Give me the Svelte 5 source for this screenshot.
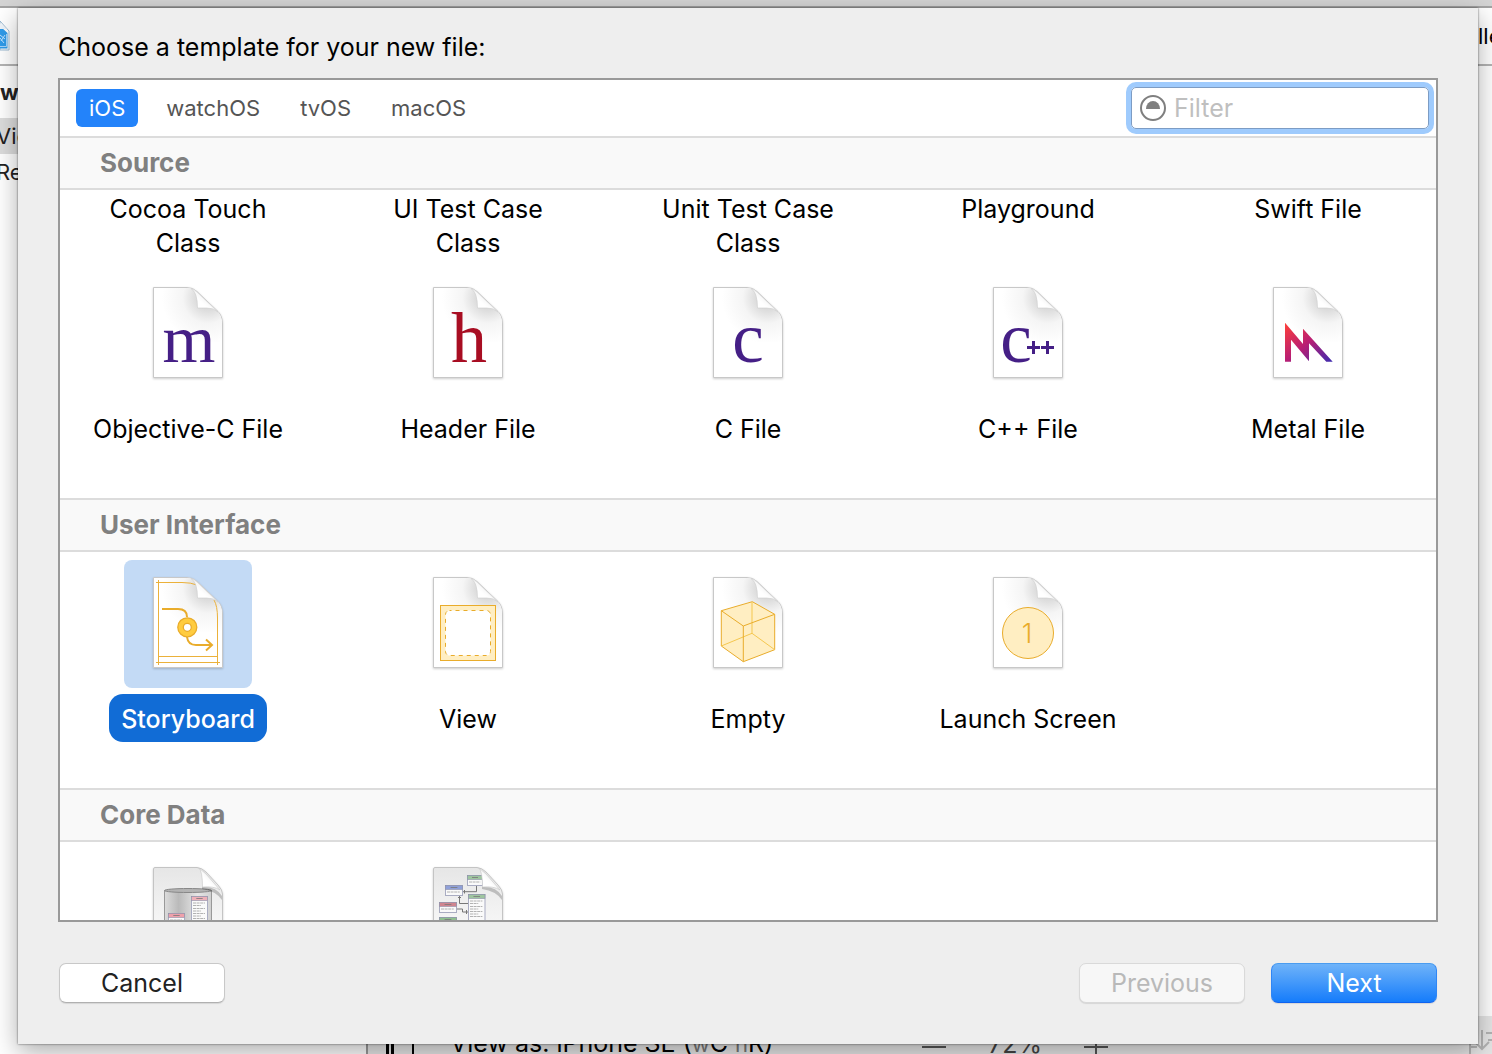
<script>
  const platforms = ['iOS', 'watchOS', 'tvOS', 'macOS'];
  const scrolled = ['Cocoa Touch Class', 'UI Test Case Class', 'Unit Test Case Class', 'Playground', 'Swift File'];
  const sources = [
    { name: 'Objective-C File', art: 'm' },
    { name: 'Header File', art: 'h' },
    { name: 'C File', art: 'c' },
    { name: 'C++ File', art: 'cpp' },
    { name: 'Metal File', art: 'metal' }
  ];
  const interfaces = [
    { name: 'Storyboard', art: 'storyboard' },
    { name: 'View', art: 'view' },
    { name: 'Empty', art: 'empty' },
    { name: 'Launch Screen', art: 'launch' }
  ];
  const models = [
    { name: 'Data Model', art: 'data' },
    { name: 'Mapping Model', art: 'mapping' }
  ];

  let platform = $state('iOS');
  let selected = $state('Storyboard');
  let filter = $state('');
</script>

{#snippet table(x, y, w, h, color)}
  <rect {x} {y} width={w} height={h} fill="#fafafa" stroke="#a9acc2" stroke-width="1" />
  <rect {x} {y} width={w} height="4" fill={color} stroke="#8c90a8" stroke-width=".6" />
  <path d="M{x + w * 0.3} {y + 2}h{w * 0.4}" stroke="#777" stroke-width=".8" />
  {#each [6.5, 9, 12, 14.5, 17, 19.5, 22] as dy, i}
    {#if dy < h - 1}
      <path d="M{x + 1.5} {y + dy}h{w * (i % 2 ? 0.5 : 0.75)}" stroke="#a0a0a0" stroke-width=".8" stroke-dasharray="3 .6" />
    {/if}
  {/each}
{/snippet}

{#snippet artwork(kind)}
  <svg class="art" viewBox="0 0 128 128" aria-hidden="true">
    {#if kind === 'data' || kind === 'mapping'}
      <path class="page-shadow" d="M31 17.500H73Q78 18 82 22L94 35Q98.500 40 98.500 44V110H29.500V19Q29.500 17.500 31 17.500Z" fill="url(#greyPage)" stroke="#c4c4c4" />
      {#if kind === 'data'}
        <path d="M40.500 40.500V110H87.500V40.500Z" fill="url(#drum)" stroke="#999" />
        <ellipse cx="64" cy="40.500" rx="23.500" ry="2" fill="#b4b4b4" stroke="#888" />
        {@render table(67.5, 46.5, 16, 40, '#efb0b8')}
        {@render table(44.5, 63.500, 16, 30, '#efa0aa')}
      {:else}
        <path d="M72.500 36V41.700H59M55.500 46V53.500H64.500M53 59H58.500V62H64.500M60.500 40v3.500M54 47.500h3M62.500 60v4" fill="none" stroke="#777" />
        {@render table(63.5, 25.5, 15, 10, '#9ec59f')}
        {@render table(41.5, 35.5, 17, 10, '#8fa0d8')}
        {@render table(64.5, 44.5, 16.5, 40, '#9ec59f')}
        {@render table(35.5, 52.5, 17, 10, '#d0858f')}
        {@render table(35.5, 67.5, 17, 10, '#8fc08f')}
      {/if}
      <path d="M78 37Q92 36 98 46V50Q92 41 78 39Z" fill="#000" opacity=".2" />
      <path d="M75 18Q78.500 22 78.500 37Q90 36 96 40L82 24Z" fill="url(#curl)" stroke="#c4c4c4" stroke-width=".6" />
    {:else}
      <path class="page-shadow" d="M29.500 17.500H63Q69 17.500 73 21.500L94 41.500Q98.500 46 98.500 54V107.500H29.500Z" fill="#fff" stroke="#c8c8c8" />
      <path d="M30 18H63Q69 18 73 22L94 42Q98 46 98 54V72H30Z" fill="url(#fold)" />
      {#if kind === 'storyboard'}
        <path d="M32 22.500H58Q67 22.500 73 25M34.500 20V105M90 40Q93.500 46 93.500 58V105M34.500 96.500H93.500M32 102.500H96" fill="none" stroke="#ebb13a" />
      {/if}
      <path d="M67 18.500Q73.500 22 73.500 38H83Q90 38 94 42L73 22Q70 19 67 18.500Z" fill="url(#curl)" stroke="#cfcfcf" stroke-width=".6" />
      {#if kind === 'm'}
        <text class="glyph purple" x="65" y="92" font-size="68">m</text>
      {:else if kind === 'h'}
        <text class="glyph red" x="65" y="92" font-size="72">h</text>
      {:else if kind === 'c'}
        <text class="glyph purple" x="64" y="92" font-size="71">c</text>
      {:else if kind === 'cpp'}
        <text class="glyph purple" x="52" y="92" font-size="71">c</text>
        <path d="M63 77.500H76M69.500 71V84M77 77.500H90M83.500 71V84" stroke="#451f86" stroke-width="3" />
      {:else if kind === 'metal'}
        <path d="M41 52.700V91.700H47V69.700L65 91.300V73.300L82.300 91.700H88.700L59 58.700V74Z" fill="url(#metal)" />
      {:else if kind === 'storyboard'}
        <g fill="none" stroke="#e9ac2b" stroke-width="2">
          <path d="M38 49H54Q63 49 63 57M63 77Q64 85 72 85H87M82 79.500L88 85L82 90.500" />
          <circle cx="63.300" cy="67.300" r="9.500" fill="#ffcc3f" stroke-width="1.300" />
          <circle cx="63.300" cy="67.300" r="4" fill="#fff" stroke-width="1.300" />
        </g>
      {:else if kind === 'view'}
        <rect x="36.500" y="45.500" width="55" height="55" fill="#ffeec2" stroke="#e9ac2b" />
        <rect x="41.500" y="50.500" width="45" height="45" rx="4" fill="#fff" stroke="#e9ac2b" stroke-dasharray="4 4" stroke-dashoffset="2" />
      {:else if kind === 'empty'}
        <g stroke-linejoin="round" stroke="#e9ac2b" fill="none">
          <path d="M68.300 41.700L90.700 54.300V89.700L59.300 101.700L37.300 86V50.700Z" fill="#ffeec2" />
          <path d="M68 42V73.300M37.300 86L68 73.300L90.700 89.700" stroke="#f5c74f" />
          <path d="M37.300 50.700L59.300 66L90.700 54.300M59.300 66V101.700" />
        </g>
      {:else}
        <circle cx="64" cy="73" r="25.500" fill="#ffeec2" stroke="#e9ac2b" />
        <text class="one" x="63" y="83" font-size="27">1</text>
      {/if}
    {/if}
  </svg>
{/snippet}

{#snippet templates(items)}
  <div class="grid">
    {#each items as item}
      <button class="cell" class:selected={selected === item.name} onclick={() => (selected = item.name)}>
        <span class="tile">{@render artwork(item.art)}</span>
        <span class="label">{item.name}</span>
      </button>
    {/each}
  </div>
{/snippet}

<svg class="defs" aria-hidden="true">
  <defs>
    <radialGradient id="fold" gradientUnits="userSpaceOnUse" cx="84" cy="28" r="46">
      <stop offset="0" stop-color="#cfcfcf" />
      <stop offset=".26" stop-color="#dcdcdc" />
      <stop offset=".55" stop-color="#f5f5f5" />
      <stop offset="1" stop-color="#fff" />
    </radialGradient>
    <linearGradient id="curl" x1="1" y1="0" x2="0" y2="1">
      <stop offset=".4" stop-color="#f2f2f2" />
      <stop offset=".6" stop-color="#fff" />
    </linearGradient>
    <linearGradient id="greyPage" x1="0" y1="0" x2="0" y2="1">
      <stop offset="0" stop-color="#e6e6e6" />
      <stop offset=".6" stop-color="#f6f6f6" />
    </linearGradient>
    <linearGradient id="drum">
      <stop offset="0" stop-color="#dcdcdc" />
      <stop offset=".3" stop-color="#bababa" />
      <stop offset=".7" stop-color="#e6e6e6" />
      <stop offset="1" stop-color="#d0d0d0" />
    </linearGradient>
    <linearGradient id="metal" x1="0" y1="0" x2="1" y2="1">
      <stop offset="0" stop-color="#ff4038" />
      <stop offset=".5" stop-color="#b81e74" />
      <stop offset="1" stop-color="#3c2bb0" />
    </linearGradient>
  </defs>
</svg>

<div class="screen">
  <div class="window">
    <div class="titlebar"></div>
    <div class="crumbs">
      <svg class="file" viewBox="0 0 10 30" aria-hidden="true">
        <path d="M0 0L9 10V29H0Z" fill="#fff" stroke="#9bb9d2" />
        <path d="M0 5L7.500 12V27.500H0Z" fill="#2f9bea" />
        <path d="M0 2V8H7Z" fill="#eef4fa" />
        <path d="M0 14L5 18M1 20L5 14M0 17L4 22" stroke="#bfe2ff" fill="none" />
        <path d="M0 25.500H6.500V13" stroke="#a5d4fb" fill="none" />
      </svg>
      <span>lle</span>
    </div>
    <div class="body">
      <div class="sidebar">
        <span class="row bold">w</span>
        <span class="row active">Vie</span>
        <span class="row">Re</span>
      </div>
      <div class="canvas">
        <div class="devicebar">
          <span class="outline"></span>
          <span class="device">View as: iPhone SE (<i>w</i>C <i>h</i>R)</span>
          <span class="zoom">
            <svg viewBox="0 0 24 24" aria-hidden="true"><path d="M0 17H24" /></svg>
            <span>72%</span>
            <svg viewBox="0 0 24 24" aria-hidden="true"><path d="M0 17H24M12 5V24" /></svg>
          </span>
          <svg class="fit" viewBox="0 0 26 26" aria-hidden="true">
            <path d="M4 2V26M4 5H12M4 12H9M4 19H11M16 2V21M9 14L16 21L23 14M20 5H26M22 12H26" fill="none" stroke="#b4b4b4" stroke-width="2" />
          </svg>
        </div>
      </div>
    </div>
  </div>

  <main class="sheet">
    <h1>Choose a template for your new file:</h1>
    <section class="panel">
      <div class="toolbar">
        <nav class="tabs">
          {#each platforms as p}
            <button class:on={platform === p} onclick={() => (platform = p)}>{p}</button>
          {/each}
        </nav>
        <label class="filter">
          <svg viewBox="0 0 26 26" aria-hidden="true">
            <circle cx="13" cy="13" r="12" fill="none" stroke="#7f7f7f" stroke-width="2" />
            <path d="M6 14A7 8 0 0 1 20 14Z" fill="#7f7f7f" />
          </svg>
          <input type="text" placeholder="Filter" aria-label="Filter" bind:value={filter} />
        </label>
      </div>
      <div class="list">
        <h2>Source</h2>
        <div class="grid scrolled">
          {#each scrolled as name}
            <button class="cell" onclick={() => (selected = name)}><span class="label">{name}</span></button>
          {/each}
        </div>
        {@render templates(sources)}
        <h2 class="next">User Interface</h2>
        <div class="inset">{@render templates(interfaces)}</div>
        <h2 class="next">Core Data</h2>
        <div class="inset">
          <div class="grid">
            {#each models as item}
              <button class="cell" aria-label={item.name} onclick={() => (selected = item.name)}>
                <span class="tile">{@render artwork(item.art)}</span>
              </button>
            {/each}
          </div>
        </div>
      </div>
    </section>
    <footer>
      <button class="push">Cancel</button>
      <span class="spacer"></span>
      <button class="push" disabled>Previous</button>
      <button class="push primary">Next</button>
    </footer>
  </main>
</div>

<style>
  :global(body) {
    font-family: Inter, Roboto, "Liberation Sans", sans-serif;
    font-size: 25px;
    color: #000;
  }
  button,
  input {
    font: inherit;
    color: inherit;
    border: 0;
    padding: 0;
    margin: 0;
    background: none;
  }
  .defs {
    position: absolute;
    width: 0;
    height: 0;
  }
  .screen {
    display: grid;
    grid-template: minmax(0, 1fr) / minmax(0, 1fr);
    height: 100vh;
    overflow: hidden;
  }
  .window,
  .sheet {
    grid-area: 1 / 1;
    box-sizing: border-box;
    min-height: 0;
  }
  .window {
    display: flex;
    flex-direction: column;
    background: #fff;
    font-size: 22px;
  }
  .titlebar {
    height: 6px;
    background: #d4d4d4;
    border-bottom: 2px solid #a3a3a3;
  }
  .crumbs {
    display: flex;
    align-items: center;
    justify-content: space-between;
    height: 56px;
    border-bottom: 2px solid #b4b4b4;
  }
  .crumbs span {
    width: 14px;
    white-space: nowrap;
    overflow: hidden;
  }
  .file {
    width: 10px;
    height: 30px;
  }
  .body {
    display: flex;
    flex: 1;
    min-height: 0;
  }
  .sidebar {
    width: 366px;
    padding-top: 12px;
    border-right: 2px solid #999;
    color: #222;
  }
  .row {
    display: block;
    line-height: 36px;
    text-indent: -4px;
  }
  .bold {
    margin-bottom: 12px;
    font-weight: 700;
    line-height: 28px;
    text-indent: 0;
  }
  .active {
    background: #dcdcdc;
  }
  .canvas {
    flex: 1;
    display: flex;
    flex-direction: column;
    justify-content: flex-end;
  }
  .devicebar {
    display: flex;
    align-items: flex-end;
    height: 38px;
    background: #e6e6e6;
    white-space: nowrap;
    overflow: hidden;
  }
  .outline {
    width: 18px;
    height: 38px;
    margin-left: 18px;
    border-left: 8px double #000;
    border-right: 2px solid #000;
  }
  .device {
    flex: 1;
    margin-left: 36px;
    font-size: 25px;
    line-height: 20px;
  }
  .device i {
    font-style: normal;
    font-size: 22px;
    color: #777;
  }
  .zoom {
    display: flex;
    align-items: flex-end;
    gap: 42px;
    margin-right: 358px;
    font-size: 25px;
    line-height: 20px;
    color: #444;
  }
  .zoom svg {
    width: 24px;
    height: 24px;
    fill: none;
    stroke: #555;
    stroke-width: 2px;
  }
  .fit {
    width: 26px;
    height: 26px;
  }
  .sheet {
    display: flex;
    flex-direction: column;
    margin: 8px 14px 10px 18px;
    padding: 22px 40px 0;
    background: #eee;
    box-shadow: 0 0 2px rgba(0, 0, 0, 0.6), 0 8px 24px rgba(0, 0, 0, 0.32);
  }
  h1 {
    margin: 0 0 14px;
    font-size: 25px;
    font-weight: 400;
    line-height: 34px;
  }
  .panel {
    display: flex;
    flex: 1;
    flex-direction: column;
    min-height: 0;
    border: 2px solid #999;
    background: #fff;
  }
  .toolbar {
    display: flex;
    align-items: center;
    justify-content: space-between;
    height: 56px;
    padding: 0 7px 0 16px;
    border-bottom: 2px solid #dcdcdc;
  }
  .tabs {
    display: flex;
    gap: 16px;
  }
  .tabs button {
    padding: 0 12px;
    border-radius: 6px;
    font-size: 22px;
    line-height: 38px;
    color: #555;
  }
  .tabs .on {
    background: #2383fa;
    color: #fff;
    padding: 0 13px;
  }
  .filter {
    display: flex;
    align-items: center;
    gap: 8px;
    box-sizing: border-box;
    width: 298px;
    height: 42px;
    padding: 0 8px;
    border: 1px solid #7d9cc4;
    border-radius: 5px;
    box-shadow: 0 0 0 5px #9fcbfd;
  }
  .filter svg {
    flex: none;
    width: 26px;
    height: 26px;
  }
  .filter input {
    flex: 1;
    min-width: 0;
    outline: none;
  }
  .filter input::placeholder {
    color: #bfbfbf;
    opacity: 1;
  }
  .list {
    flex: 1;
    min-height: 0;
    overflow: hidden;
  }
  h2 {
    margin: 0;
    padding: 0 40px;
    border-bottom: 2px solid #dcdcdc;
    background: #f9f9f9;
    color: #808080;
    font-size: 26px;
    font-weight: 700;
    line-height: 50px;
  }
  .next {
    border-top: 2px solid #dcdcdc;
  }
  .grid {
    display: grid;
    grid-template-columns: repeat(5, minmax(0, 1fr));
    margin: 0 -12px;
    padding-bottom: 46px;
  }
  .inset {
    padding-top: 8px;
  }
  .scrolled {
    box-sizing: border-box;
    height: 80px;
    padding: 0 0 10px;
  }
  .cell {
    display: flex;
    flex-direction: column;
    align-items: center;
    gap: 6px;
  }
  .label {
    padding: 8px 12px 6px;
    border-radius: 14px;
    line-height: 34px;
  }
  .scrolled .label {
    max-width: 180px;
    padding: 2px 0 0;
  }
  .tile {
    width: 128px;
    height: 128px;
    border-radius: 8px;
  }
  .selected .tile {
    background: #c3daf5;
  }
  .selected .label {
    background: #116cd6;
    color: #fff;
    font-weight: 500;
  }
  .art {
    display: block;
    width: 128px;
    height: 128px;
  }
  .page-shadow {
    filter: drop-shadow(0 1px 1px rgba(0, 0, 0, 0.2));
  }
  .glyph {
    font-family: "Liberation Serif", serif;
    text-anchor: middle;
  }
  .purple {
    fill: #451f86;
  }
  .red {
    fill: #a80d22;
  }
  .one {
    font-weight: 300;
    text-anchor: middle;
    fill: #e9ac2b;
  }
  footer {
    display: flex;
    gap: 26px;
    padding: 41px 1px;
  }
  .spacer {
    flex: 1;
  }
  .push {
    box-sizing: border-box;
    width: 166px;
    height: 40px;
    border: 1px solid #c8c8c8;
    border-bottom-color: #b0b0b0;
    border-radius: 7px;
    background: #fff;
    color: #222;
    line-height: 36px;
    box-shadow: 0 1px 1px rgba(0, 0, 0, 0.1);
  }
  .push:disabled {
    border-color: #d9d9d9;
    background: #f7f7f7;
    color: #b9b9b9;
  }
  .primary {
    border-color: #4a9cf0 #2f86f5 #0f63f0;
    background: linear-gradient(#6fb3f9, #157cfb);
    color: #fff;
  }
</style>
